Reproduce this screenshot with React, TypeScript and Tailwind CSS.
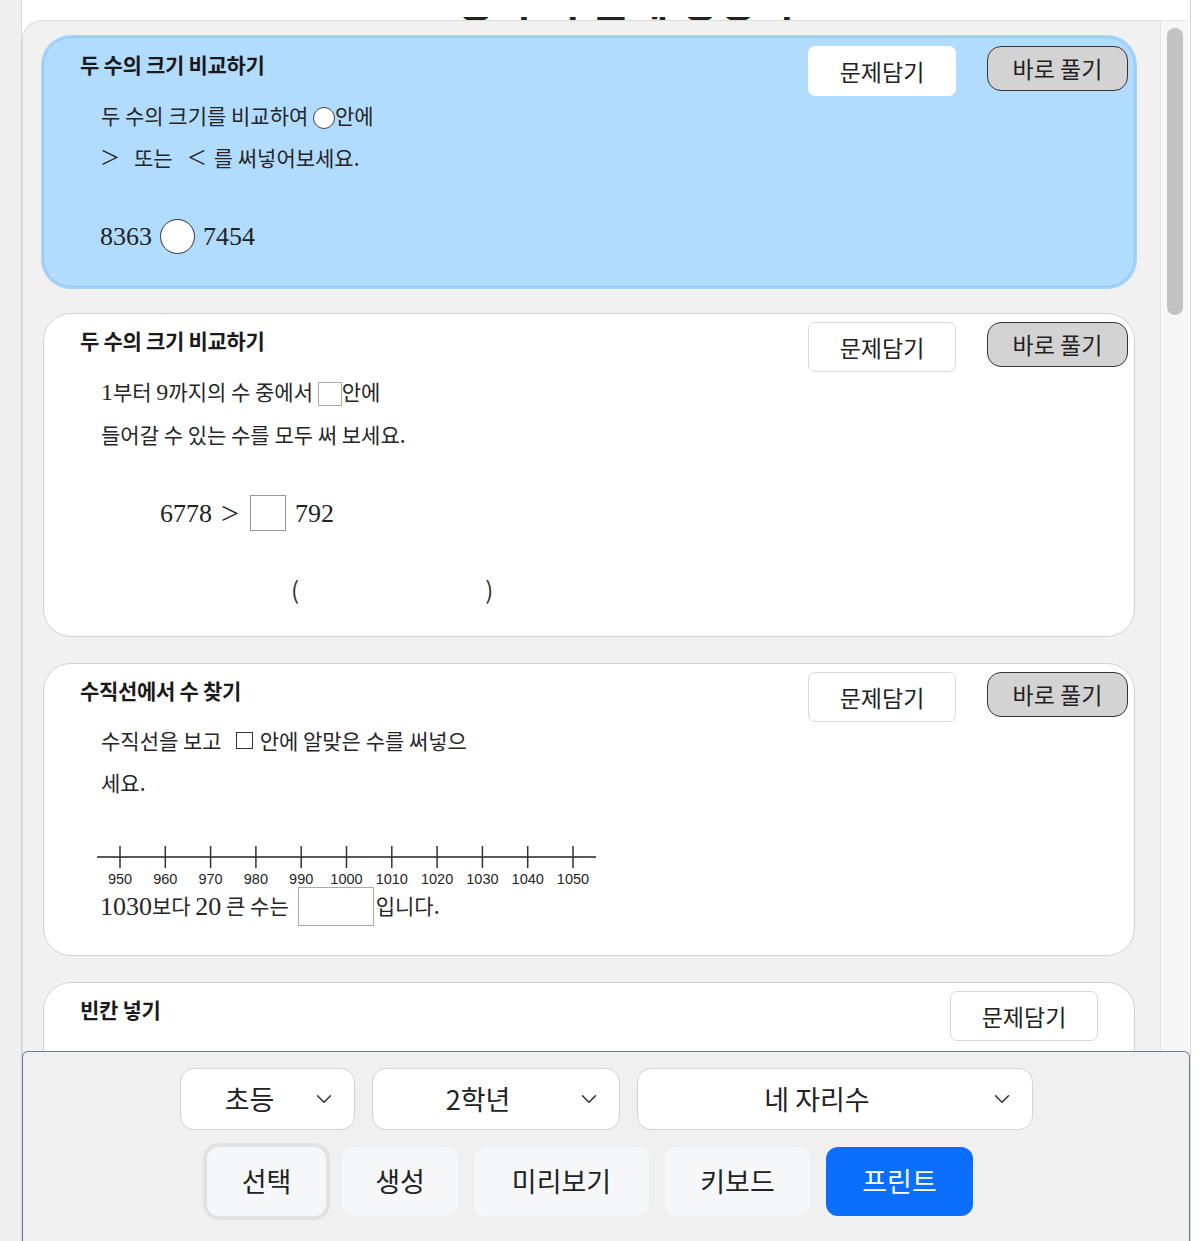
import React from 'react';
import { ChevronDown } from 'lucide-react';

const serif = "font-['Liberation_Serif',serif]";

function CardButtons({ selected, solve = true }: { selected?: boolean; solve?: boolean }) {
  return (
    <div className={solve ? 'flex shrink-0 gap-[31px]' : 'mr-[30px] flex shrink-0 gap-[31px]'}>
      <button
        className={`h-[50px] w-[148px] rounded-[7px] border bg-white text-[23px] leading-none text-[#222] ${
          selected ? 'border-white' : 'border-[#d9d9d9]'
        }`}
      >
        문제담기
      </button>
      {solve && (
        <button className="h-[45px] w-[141px] rounded-[14px] border border-[#333] bg-[#d3d3d3] text-[23px] leading-none text-[#222]">
          바로 풀기
        </button>
      )}
    </div>
  );
}

function Card({
  title,
  selected,
  solve = true,
  className = '',
  children,
}: {
  title: string;
  selected?: boolean;
  solve?: boolean;
  className?: string;
  children?: React.ReactNode;
}) {
  return (
    <div
      className={`flex shrink-0 items-start justify-between rounded-[28px] border pl-[36px] pr-[6px] pt-[8px] ${
        selected ? 'border-[#92c5f7] bg-[#b2dcfd] ring-2 ring-[#a8d2fa]' : 'border-[#d2d2d2] bg-white'
      } ${className}`}
    >
      <div className="flex flex-col">
        <div className="mt-[4px] text-[21px] font-bold leading-[28px] tracking-[-0.3px] text-[#1a1a1a]">{title}</div>
        {children}
      </div>
      <CardButtons selected={selected} solve={solve} />
    </div>
  );
}

function NumberLine() {
  const labels = [950, 960, 970, 980, 990, 1000, 1010, 1020, 1030, 1040, 1050];
  return (
    <svg width="500" height="44" className="ml-[17px] mt-[39px] block">
      <line x1="0" y1="15" x2="499" y2="15" stroke="#222" strokeWidth="1.5" />
      {labels.map((l, i) => {
        const x = 23 + i * 45.3;
        return (
          <g key={l}>
            <line x1={x} y1="4" x2={x} y2="26" stroke="#333" strokeWidth="1.5" />
            <text
              x={x}
              y="42"
              textAnchor="middle"
              fontSize="14.5"
              fill="#1f1f1f"
              fontFamily="'Liberation Sans', Arial, sans-serif"
            >
              {l}
            </text>
          </g>
        );
      })}
    </svg>
  );
}

function Select({ label, width }: { label: string; width: string }) {
  return (
    <div className={`flex h-[62px] items-center rounded-[14px] border border-[#d3d3d3] bg-white pl-[8px] pr-[17px] ${width}`}>
      <span className="flex-1 text-center text-[27px] text-[#222]">{label}</span>
      <ChevronDown size={26} strokeWidth={1.4} className="text-[#333]" />
    </div>
  );
}

export default function App() {
  return (
    <div className="flex h-[1241px] w-[1200px] overflow-hidden bg-white font-['Noto_Sans_CJK_KR','Noto_Sans',sans-serif]">
      <div className="w-[21px] shrink-0 bg-[#efefef]" />

      <div className="relative flex h-full w-[1170px] shrink-0 flex-col border-x border-[#d6d6d6]">
        <div className="h-[17px] shrink-0" />
        <div className="flex h-[3px] shrink-0 items-end justify-center overflow-hidden">
          <h1 className="whitespace-nowrap text-[42px] font-bold leading-none text-[#222]">초등 수학 문제 생성기</h1>
        </div>

        <div className="flex min-h-0 flex-1">
          <div className="flex w-[1138px] shrink-0 flex-col gap-[26px] overflow-hidden rounded-tl-[20px] border-l border-t border-[#dcdcdc] bg-[#f1f1f1] pl-[20px] pr-[25px] pt-[16px]">
            <Card title="두 수의 크기 비교하기" selected className="pb-[29px]">
              <div className="mt-[16px] pl-[21px] text-[21px] leading-[42px] text-[#262626]">
                <div>
                  두 수의 크기를 비교하여{' '}
                  <span className="inline-block h-[22px] w-[22px] rounded-full border border-[#444] bg-white align-middle" />
                  안에
                </div>
                <div className="flex items-center">
                  <span className={`${serif} mr-[15px] text-[32px] leading-none`}>&gt;</span>
                  또는
                  <span className={`${serif} ml-[15px] mr-[8px] text-[32px] leading-none`}>&lt;</span>를 써넣어보세요.
                </div>
              </div>
              <div className={`${serif} mt-[37px] flex h-[42px] items-center pl-[20px] text-[26px] text-[#222]`}>
                <span>8363</span>
                <span className="mx-[8px] inline-block h-[35px] w-[35px] rounded-full border border-[#333] bg-white" />
                <span>7454</span>
              </div>
            </Card>

            <Card title="두 수의 크기 비교하기" className="pb-[26px]">
              <div className="mt-[16px] pl-[21px] text-[21px] leading-[42px] text-[#262626]">
                <div>
                  <span className={`${serif} text-[24px]`}>1</span>부터 <span className={`${serif} text-[24px]`}>9</span>
                  까지의 수 중에서{' '}
                  <span className="inline-block h-[24px] w-[24px] border border-[#aaa] bg-white align-middle" />
                  안에
                </div>
                <div>들어갈 수 있는 수를 모두 써 보세요.</div>
              </div>
              <div className={`${serif} mt-[37px] flex h-[42px] items-center pl-[80px] text-[26px] text-[#222]`}>
                <span>6778</span>
                <span className="ml-[9px] text-[32px] leading-none">&gt;</span>
                <span className="ml-[11px] inline-block h-[36px] w-[36px] border border-[#999] bg-white" />
                <span className="ml-[9px]">792</span>
              </div>
              <div className="mt-[34px] flex h-[42px] items-center text-[24px] text-[#333]">
                <span className="ml-[211px]">(</span>
                <span className="ml-[186px]">)</span>
              </div>
            </Card>

            <Card title="수직선에서 수 찾기" className="pb-[29px]">
              <div className="mt-[15px] pl-[21px] text-[21px] leading-[42px] text-[#262626]">
                <div className="flex items-center">
                  수직선을 보고
                  <span className="ml-[14px] mr-[7px] inline-block h-[17px] w-[17px] border-[1.5px] border-[#333]" />
                  안에 알맞은 수를 써넣으
                </div>
                <div>세요.</div>
              </div>
              <NumberLine />
              <div className="flex h-[40px] items-center pl-[20px] text-[21px] text-[#262626]">
                <span className={`${serif} text-[26px]`}>1030</span>
                <span>보다&nbsp;</span>
                <span className={`${serif} text-[26px]`}>20</span>
                <span>&nbsp;큰 수는</span>
                <span className="ml-[9px] inline-block h-[39px] w-[76px] border border-[#aaa] bg-white" />
                <span className="ml-[2px]">입니다.</span>
              </div>
            </Card>

            <Card title="빈칸 넣기" solve={false} className="pb-[60px]">
              <div className="mt-[16px] pl-[21px] text-[21px] leading-[42px] text-[#262626]">
                <div className="flex items-center">
                  <span className="mr-[2px] inline-block h-[17px] w-[17px] border-[1.5px] border-[#333]" />
                  안에 알맞은 수를 써넣으세요.
                </div>
              </div>
            </Card>
          </div>

          <div className="w-[28px] shrink-0 border-l border-t border-[#e4e4e4] bg-[#f7f7f7] pt-[7px]">
            <div className="ml-[6px] h-[287px] w-[16px] rounded-full bg-[#c2c2c2]" />
          </div>
        </div>

        <div className="absolute bottom-0 left-0 right-0 flex h-[190px] flex-col items-center rounded-t-[6px] border border-b-0 border-[#6d7d8a] bg-[#f0f0f0] pt-[16px]">
          <div className="flex gap-[17px]">
            <Select label="초등" width="w-[175px]" />
            <Select label="2학년" width="w-[248px]" />
            <Select label="네 자리수" width="w-[396px]" />
          </div>
          <div className="mt-[17px] flex gap-[16px] pr-[32px] text-[27px] text-[#222]">
            <button className="h-[69px] w-[119px] rounded-[12px] bg-[#f6f7f8] ring-4 ring-[#e2e2e2]">선택</button>
            <button className="h-[69px] w-[116px] rounded-[12px] bg-[#f6f7f8]">생성</button>
            <button className="h-[69px] w-[175px] rounded-[12px] bg-[#f6f7f8]">미리보기</button>
            <button className="h-[69px] w-[145px] rounded-[12px] bg-[#f6f7f8]">키보드</button>
            <button className="h-[69px] w-[147px] rounded-[12px] bg-[#0b6efd] text-white">프린트</button>
          </div>
        </div>
      </div>
    </div>
  );
}
